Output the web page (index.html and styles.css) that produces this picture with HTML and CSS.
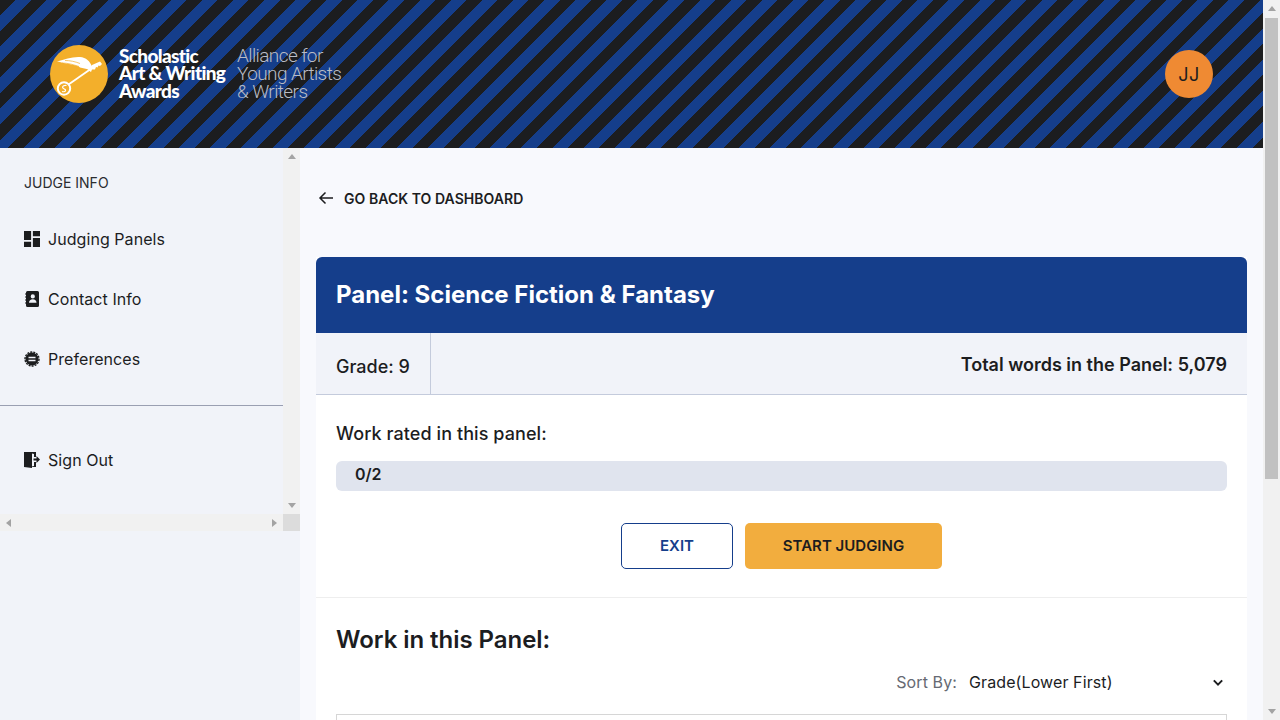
FILE: index.html
```html
<!DOCTYPE html>
<html lang="en">
<head>
    <meta charset="UTF-8">
    <title>Judging Panel</title>
    <link rel="stylesheet" href="styles.css">
</head>
<body>
    <div class="viewport">
        <header class="topbar">
            <div class="logo">
                <svg class="logo-mark" viewBox="0 0 58 58" width="58" height="58">
                    <circle cx="29" cy="29" r="29" fill="#f3af2b"/>
                    <path d="M7 16.500 C15 14.500 22 11.500 30 12 C36 12.500 40 16 42 22 L39 25 C36 23.500 33 23 30 22.500 C28 20 18 19.500 9 16.800Z" fill="#fff"/>
                    <path d="M12 18 C18 18 23 19.500 29 21.500 M15 15.500 C20 15.500 25 16.500 30 18.500" stroke="#f3af2b" stroke-width=".7" fill="none"/>
                    <path d="M40 24.500 L18.500 39.500" stroke="#fff" stroke-width="1.800" fill="none"/>
                    <path d="M38 25 L42 20 L50 16.500 L52 19 L50 21 L48.500 20.500 L47.500 22.500 L46 22 L45 24.500 L42 24.500 L41 27Z" fill="#fff"/>
                    <circle cx="14" cy="43.500" r="6.200" fill="none" stroke="#fff" stroke-width="2"/>
                    <path d="M16.500 40.500 C12.500 39.800 11.500 43 14 43.800 C16.500 44.500 16 47.500 12 46.500" stroke="#fff" stroke-width="1.200" fill="none"/>
                </svg>
                <div class="logo-name">Scholastic<br>Art &amp; Writing<br>Awards</div>
                <div class="logo-tag">Alliance for<br>Young Artists<br>&amp; Writers</div>
            </div>
            <div class="avatar">JJ</div>
        </header>

        <div class="page">
            <aside class="sidebar">
                <div class="side-box">
                    <div class="side-scroll">
                        <div class="side-title">JUDGE INFO</div>
                        <a class="side-link">
                            <svg viewBox="3 3 18 18" width="16" height="16"><path d="M3 13h8V3H3v10zm0 8h8v-6H3v6zm10 0h8V11h-8v10zm0-18v6h8V3h-8z"/></svg>
                            Judging Panels
                        </a>
                        <a class="side-link">
                            <svg viewBox="0 0 16 16" width="16" height="16"><path fill-rule="evenodd" d="M3.500 0h10A1.500 1.500 0 0 1 15 1.500v13a1.500 1.500 0 0 1-1.500 1.500h-10A1.500 1.500 0 0 1 2 14.500v-13A1.500 1.500 0 0 1 3.500 0zM8.800 3.300a2.100 2.100 0 1 0 0 4.200 2.100 2.100 0 0 0 0-4.200zM5 11.800h7.500c0-2.200-1.500-3.500-3.700-3.500S5 9.600 5 11.800z"/><path d="M1 2.500h2v1H1zM1 5.500h2v1H1zM1 8.500h2v1H1zM1 11.500h2v1H1z"/></svg>
                            Contact Info
                        </a>
                        <a class="side-link">
                            <svg viewBox="0 0 16 16" width="16" height="16"><circle cx="8" cy="8" r="6.500"/><circle cx="8" cy="8" r="7" fill="none" stroke="#1c1d1f" stroke-width="1.400" stroke-dasharray="2 1.100"/><path d="M4.500 6.500h7M4.500 9.500h7" stroke="#f1f3f9" stroke-width="1.300" fill="none"/></svg>
                            Preferences
                        </a>
                        <div class="side-rule"></div>
                        <a class="side-link signout">
                            <svg viewBox="0 0 16 16" width="16" height="16"><path d="M0 0h12v5h-2V2L8 1.500V14.500L10 14V10h2v5H8v1L0 15z"/><path d="M9.500 6.500h3V4l3.500 3.500-3.500 3.500V8.500h-3z"/></svg>
                            Sign Out
                        </a>
                    </div>
                    <div class="bar bar-y">
                        <span class="arrow arrow-up"></span>
                        <span class="arrow arrow-down"></span>
                    </div>
                    <div class="bar bar-x">
                        <span class="arrow arrow-left"></span>
                        <span class="arrow arrow-right"></span>
                    </div>
                    <div class="bar-corner"></div>
                </div>
            </aside>

            <main class="content">
                <a class="back">
                    <svg viewBox="0 0 16 16" width="16" height="16"><path d="M15 8H2M7.500 2.500L2 8l5.500 5.500" fill="none" stroke="#1c1d1f" stroke-width="1.500"/></svg>
                    GO BACK TO DASHBOARD
                </a>

                <section class="panel">
                    <h1 class="panel-head">Panel: Science Fiction &amp; Fantasy</h1>
                    <div class="panel-info">
                        <div class="grade">Grade: 9</div>
                        <div class="total">Total words in the Panel: 5,079</div>
                    </div>
                    <div class="progress-block">
                        <div class="progress-label">Work rated in this panel:</div>
                        <div class="progress-bar">0/2</div>
                        <div class="actions">
                            <button class="btn btn-exit">EXIT</button>
                            <button class="btn btn-start">START JUDGING</button>
                        </div>
                    </div>
                    <div class="works">
                        <h2>Work in this Panel:</h2>
                        <div class="sort-row">
                            <span class="sort-label">Sort By:</span>
                            <div class="sort-select">
                                Grade(Lower First)
                                <svg viewBox="0 0 12 8" width="10" height="7"><path d="M1 1.500l5 5 5-5" fill="none" stroke="#1c1d1f" stroke-width="2.400"/></svg>
                            </div>
                        </div>
                        <div class="work-list"></div>
                    </div>
                </section>
            </main>
        </div>
    </div>

    <div class="page-scrollbar">
        <span class="arrow arrow-up"></span>
        <div class="page-thumb"></div>
        <span class="arrow arrow-down"></span>
    </div>
</body>
</html>
```

FILE: styles.css
```css
* {
    box-sizing: border-box;
    margin: 0;
    padding: 0;
}

body {
    display: flex;
    height: 100vh;
    overflow: hidden;
    font-family: 'Inter', sans-serif;
    color: #1c1d1f;
    background: #f8f9fd;
}

.viewport {
    flex: 1;
    min-width: 0;
    height: 100%;
    overflow: hidden;
}

.page-scrollbar {
    width: 17px;
    flex: none;
    display: flex;
    flex-direction: column;
    align-items: center;
    justify-content: space-between;
    padding: 6px 0;
    background: #f1f1f1;
}

.page-thumb {
    width: 13px;
    height: 461px;
    margin: 7px 0 auto;
    background: #c1c1c1;
}

.arrow {
    display: block;
    width: 0;
    height: 0;
    border-style: solid;
    border-color: transparent;
}

.arrow-up {
    border-width: 0 4px 5px;
    border-bottom-color: #a3a3a3;
}

.arrow-down {
    border-width: 5px 4px 0;
    border-top-color: #a3a3a3;
}

.arrow-left {
    border-width: 4px 5px 4px 0;
    border-right-color: #a3a3a3;
}

.arrow-right {
    border-width: 4px 0 4px 5px;
    border-left-color: #a3a3a3;
}

.topbar {
    height: 148px;
    display: flex;
    align-items: center;
    justify-content: space-between;
    padding: 0 50px;
    background: repeating-linear-gradient(135deg, #1c1d1f 0, #1c1d1f 11px, #153e8b 11px, #153e8b 22px);
}

.logo {
    display: flex;
    align-items: center;
}

.logo-mark {
    flex: none;
}

.logo-name {
    width: 107px;
    margin-left: 11px;
    padding-bottom: 2px;
    font-family: 'Lato', sans-serif;
    font-size: 19px;
    line-height: 17.500px;
    font-weight: 900;
    letter-spacing: -0.650px;
    white-space: nowrap;
    color: #fff;
}

.logo-tag {
    margin-left: 11px;
    font-family: 'Roboto', sans-serif;
    font-size: 19px;
    line-height: 18px;
    font-weight: 300;
    letter-spacing: -0.600px;
    color: #b9bcc4;
}

.avatar {
    width: 48px;
    height: 48px;
    border-radius: 50%;
    display: flex;
    align-items: center;
    justify-content: center;
    background: #ef8a33;
    font-size: 18px;
    letter-spacing: 0.500px;
    color: #1c1d1f;
}

.page {
    display: flex;
    height: 572px;
}

.sidebar {
    width: 300px;
    flex: none;
    background: #f1f3f9;
}

.side-box {
    height: 383px;
    display: grid;
    grid-template-columns: 1fr 17px;
    grid-template-rows: 1fr 17px;
}

.side-scroll {
    min-height: 0;
    overflow: hidden;
}

.bar {
    display: flex;
    align-items: center;
    justify-content: space-between;
    background: #f1f1f1;
}

.bar-y {
    flex-direction: column;
    padding: 6px 0;
}

.bar-x {
    padding: 0 6px;
}

.bar-corner {
    background: #dcdcdc;
}

.side-title {
    padding: 26px 24px 0;
    font-size: 14px;
    line-height: 17px;
    color: #2b2c30;
}

.side-link {
    display: flex;
    align-items: center;
    gap: 8px;
    height: 20px;
    margin: 30px 24px 40px;
    font-size: 16px;
    letter-spacing: 0.060px;
    color: #1c1d1f;
}

.side-title + .side-link {
    margin-top: 38px;
}

.side-rule {
    border-top: 1px solid #9a9fb2;
    margin-top: -4px;
}

.signout {
    margin-top: 44px;
}

.side-link svg {
    fill: #1c1d1f;
    flex: none;
}

.content {
    flex: 1;
    min-width: 0;
    padding: 0 16px;
}

.back {
    display: flex;
    align-items: center;
    gap: 10px;
    height: 18px;
    margin: 41px 0 50px 2px;
    font-size: 14px;
    font-weight: 600;
    letter-spacing: 0.050px;
    color: #1c1d1f;
}

.panel {
    background: #fff;
}

.panel-head {
    height: 76px;
    display: flex;
    align-items: center;
    padding: 0 20px 2px;
    background: #153e8b;
    border-radius: 6px 6px 0 0;
    font-size: 24px;
    font-weight: 700;
    color: #fff;
}

.panel-info {
    display: flex;
    align-items: center;
    justify-content: space-between;
    height: 62px;
    background: #f1f3f9;
    border-bottom: 1px solid #c4cbdc;
}

.grade {
    align-self: stretch;
    display: flex;
    align-items: center;
    padding: 6px 20px 0;
    border-right: 1px solid #c4cbdc;
    font-size: 18px;
    font-weight: 500;
}

.total {
    padding: 2px 20px 0;
    font-size: 18px;
    font-weight: 600;
}

.progress-block {
    padding: 28px 20px 28px;
    border-bottom: 1px solid #eeeeee;
}

.progress-label {
    font-size: 18px;
    line-height: 22px;
    font-weight: 500;
    letter-spacing: 0.080px;
}

.progress-bar {
    height: 30px;
    margin-top: 16px;
    padding: 0 19px 4px;
    display: flex;
    align-items: center;
    background: #e0e4ee;
    border-radius: 6px;
    font-size: 16px;
    font-weight: 600;
}

.actions {
    display: flex;
    justify-content: center;
    gap: 12px;
    margin-top: 32px;
}

.btn {
    height: 46px;
    padding-bottom: 2px;
    border-radius: 5px;
    font-family: 'Inter', sans-serif;
    font-size: 15px;
    font-weight: 600;
}

.btn-exit {
    width: 112px;
    background: #fff;
    border: 1px solid #153e8b;
    color: #153e8b;
}

.btn-start {
    width: 197px;
    background: #f2ad3e;
    border: none;
    color: #1c1d1f;
}

.works {
    padding: 27px 20px 0;
}

.works h2 {
    font-size: 24px;
    line-height: 30px;
    font-weight: 600;
    letter-spacing: -0.050px;
}

.sort-row {
    display: flex;
    justify-content: flex-end;
    align-items: center;
    gap: 12px;
    height: 22px;
    margin-top: 16px;
    font-size: 16px;
    letter-spacing: 0.100px;
}

.sort-label {
    color: #666a73;
}

.sort-select {
    width: 258px;
    display: flex;
    justify-content: space-between;
    align-items: center;
    padding-right: 4px;
}

.work-list {
    height: 200px;
    margin-top: 21px;
    border: 1px solid #d6d6d6;
}
```
